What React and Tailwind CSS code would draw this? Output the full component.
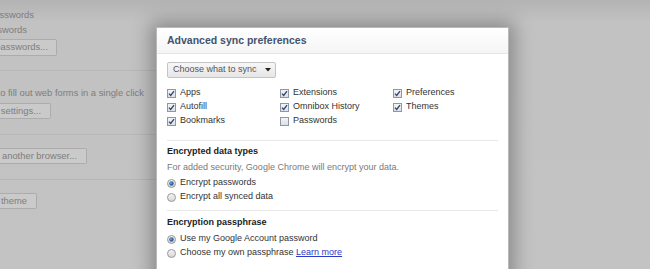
import React from "react";

const font = { fontFamily: '"Liberation Sans", Arial, sans-serif' };

const Check = ({ on }) => (
  <svg width="9" height="9" viewBox="0 0 9 9" className="shrink-0">
    <defs>
      <linearGradient id="cbg" x1="0" y1="0" x2="0" y2="1">
        <stop offset="0" stopColor="#f4f6f9" />
        <stop offset="1" stopColor="#d9dee6" />
      </linearGradient>
    </defs>
    <rect x="0.5" y="0.5" width="8" height="8" fill="url(#cbg)" stroke="#8e97a6" />
    {on && (
      <path d="M2 4.6 L3.7 6.4 L7 2.2" fill="none" stroke="#33446a" strokeWidth="1.3" />
    )}
  </svg>
);

const Radio = ({ on }) => (
  <svg width="9" height="9" viewBox="0 0 9 9" className="shrink-0">
    <defs>
      <linearGradient id="rbg" x1="0" y1="0" x2="0" y2="1">
        <stop offset="0" stopColor="#f5f5f5" />
        <stop offset="1" stopColor="#d6d6d6" />
      </linearGradient>
    </defs>
    <circle cx="4.5" cy="4.5" r="4" fill="url(#rbg)" stroke="#9a9a9a" />
    {on && <circle cx="4.5" cy="4.5" r="2.3" fill="#2f6aa8" />}
    {on && <circle cx="4" cy="4" r="0.8" fill="#9cc3ea" />}
  </svg>
);

const Opt = ({ label, on }) => (
  <div className="flex items-center gap-[4px] h-[14px]">
    <Check on={on} />
    <span className="whitespace-nowrap">{label}</span>
  </div>
);

const RadioRow = ({ on, children }) => (
  <div className="flex items-center gap-[4px] h-[14px]">
    <Radio on={on} />
    <span className="whitespace-nowrap">{children}</span>
  </div>
);

// faded page behind the overlay, clipped on the left edge
const Clip = ({ w, children }) => (
  <div className="flex justify-end overflow-hidden h-[15px] leading-[15px]" style={{ width: w }}>
    <span className="whitespace-nowrap">{children}</span>
  </div>
);

const BgButton = ({ w, pr, children, className }) => (
  <div
    className={
      "flex justify-end items-center overflow-hidden h-[16px] border border-l-0 border-[#acacac] bg-[#cacaca] rounded-r-[2px] " +
      className
    }
    style={{ width: w, paddingRight: pr }}
  >
    <span className="whitespace-nowrap">{children}</span>
  </div>
);

export default function App() {
  return (
    <div
      className="relative w-[650px] h-[269px] overflow-hidden bg-[linear-gradient(to_bottom,#b3b3b3_0px,#c2c2c2_22px,#c3c3c3_100%)] text-[9.4px] text-[#7d7d7d]"
      style={font}
    >
      <div className="flex flex-col pt-[7px] w-[160px]">
        <Clip w={34}>Offer to save passwords</Clip>
        <Clip w={27}>Never save passwords</Clip>
        <BgButton w={57} pr={8} className="mt-[2px] h-[17px]">
          Manage saved passwords...
        </BgButton>
        <div className="mt-[14px] h-px bg-[#b7b7b7]" />
        <div className="mt-[14px]">
          <Clip w={144}>Enable Autofill to fill out web forms in a single click</Clip>
        </div>
        <BgButton w={51} pr={9} className="mt-[3px]">
          Manage Autofill settings...
        </BgButton>
        <div className="mt-[15px] h-px bg-[#b7b7b7]" />
        <BgButton w={87} pr={9} className="mt-[13px]">
          Import data from another browser...
        </BgButton>
        <div className="mt-[15px] h-px bg-[#b7b7b7]" />
        <BgButton w={37} pr={9} className="mt-[13px]">
          Reset to default theme
        </BgButton>
      </div>

      <div className="absolute left-[156px] top-[27px] w-[353px] h-[260px] bg-white border border-[#b9b9b9] shadow-[0_0_18px_5px_rgba(0,0,0,0.3)] text-[9px] text-[#333]">
        <div className="h-[26px] flex items-center pl-[10px] border-b border-[#e6e6e6] bg-[linear-gradient(to_bottom,#ffffff,#f5f5f5)]">
          <span className="text-[10.5px] font-bold text-[#44536f]">Advanced sync preferences</span>
        </div>
        <div className="pl-[10px] pr-[10px]">
          <div className="mt-[8px] w-[109px] h-[16px] flex items-center justify-between pl-[5px] pr-[4px] border border-[#c4c4c4] rounded-[2px] bg-[linear-gradient(to_bottom,#f7f7f7,#e6e6e6)] text-[#555]">
            <span className="whitespace-nowrap">Choose what to sync</span>
            <svg width="6" height="4" viewBox="0 0 6 4">
              <path d="M0 0 H6 L3 3.5 Z" fill="#222" />
            </svg>
          </div>

          <div className="mt-[8px] grid grid-cols-[113px_113px_auto]">
            <Opt label="Apps" on />
            <Opt label="Extensions" on />
            <Opt label="Preferences" on />
            <Opt label="Autofill" on />
            <Opt label="Omnibox History" on />
            <Opt label="Themes" on />
            <Opt label="Bookmarks" on />
            <Opt label="Passwords" />
          </div>

          <div className="mt-[12px] h-px bg-[#e8e8e8]" />
          <div className="mt-[3px] h-[14px] leading-[14px] font-bold text-[#222]">Encrypted data types</div>
          <div className="mt-[2px] h-[14px] leading-[14px] text-[#7a7a7a]">
            For added security, Google Chrome will encrypt your data.
          </div>
          <div className="mt-[2px]">
            <RadioRow on>Encrypt passwords</RadioRow>
            <RadioRow>Encrypt all synced data</RadioRow>
          </div>

          <div className="mt-[6px] h-px bg-[#e8e8e8]" />
          <div className="mt-[4px] h-[14px] leading-[14px] font-bold text-[#222]">Encryption passphrase</div>
          <div className="mt-[3px]">
            <RadioRow on>Use my Google Account password</RadioRow>
            <RadioRow>
              Choose my own passphrase{" "}
              <a href="#" className="text-[#2b3bc4] underline">
                Learn more
              </a>
            </RadioRow>
          </div>
        </div>
      </div>
    </div>
  );
}
